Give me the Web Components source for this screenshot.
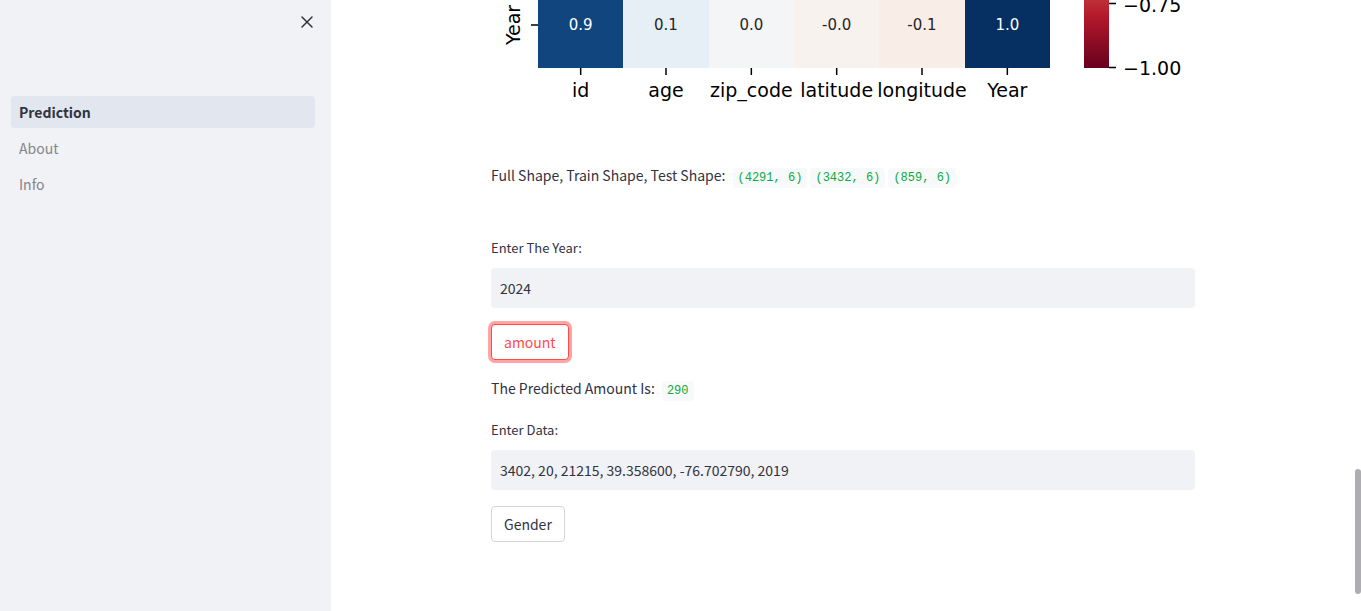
<!DOCTYPE html>
<html lang="en">
<head>
<meta charset="utf-8">
<title>Prediction</title>
<style>
  html, body { margin: 0; height: 100%; }
  body {
    --text: #31333f;
    --surface: #f0f2f6;
    --accent: #ff4b4b;
    --code: "Liberation Mono", monospace;
    background: #fff;
    color: var(--text);
    font: 14px/24px "Noto Sans CJK SC", "Open Sans", sans-serif;
    overflow: hidden;
  }
  code-chip:first-of-type { margin-left: 4px; }
</style>
</head>
<body>
<app-shell>
  <app-sidebar slot="sidebar">
    <nav-item href="#prediction" active>Prediction</nav-item>
    <nav-item href="#about">About</nav-item>
    <nav-item href="#info">Info</nav-item>
  </app-sidebar>
  <correlation-heatmap></correlation-heatmap>
  <result-line>Full Shape, Train Shape, Test Shape:
    <code-chip>(4291, 6)</code-chip> <code-chip>(3432, 6)</code-chip> <code-chip>(859, 6)</code-chip>
  </result-line>
  <input-form class="spaced" label="Enter The Year:" value="2024">
    <action-button focused>amount</action-button>
    <result-line>The Predicted Amount Is: <code-chip>290</code-chip></result-line>
  </input-form>
  <input-form label="Enter Data:" value="3402, 20, 21215, 39.358600, -76.702790, 2019">
    <action-button>Gender</action-button>
  </input-form>
</app-shell>

<script>
const define = (name, html, setup) => {
  const template = document.createElement('template');
  template.innerHTML = html;
  customElements.define(name, class extends HTMLElement {
    constructor() {
      super();
      this.attachShadow({ mode: 'open' }).append(template.content.cloneNode(true));
    }
    connectedCallback() { if (setup) setup(this, this.shadowRoot); }
  });
};

define('app-shell', `
  <style>
    :host { display: flex; height: 100vh; }
    main { flex: 1; min-width: 0; overflow: hidden; }
    .block { box-sizing: border-box; max-width: 736px; margin: 0 auto; padding: 0 16px;
             display: flex; flex-direction: column; gap: 16px; }
    ::slotted(.spaced) { margin-top: 31px; }
    .rail { flex: 0 0 6px; display: flex; flex-direction: column; }
    .before { flex: 469; }
    .thumb { flex: 125; border-radius: 3px; background: #adadb2; }
    .after { flex: 17; }
  </style>
  <slot name="sidebar"></slot>
  <main><div class="block"><slot></slot></div></main>
  <div class="rail" aria-hidden="true"><div class="before"></div><div class="thumb"></div><div class="after"></div></div>
`);

define('app-sidebar', `
  <style>
    :host { flex: 0 0 331px; box-sizing: border-box; background: var(--surface); padding: 0 16px 0 11px; }
    header { height: 96px; display: flex; justify-content: flex-end; align-items: flex-start; }
    button { border: 0; background: none; padding: 14px 0; width: 16px; height: 44px; color: var(--text); }
    svg { display: block; }
    nav { display: flex; flex-direction: column; gap: 4px; }
  </style>
  <header><button type="button" aria-label="Close sidebar">
    <svg width="16" height="16" viewBox="0 0 16 16" stroke="currentColor" stroke-width="1.5" stroke-linecap="round"><path d="M3 3l10 10M13 3L3 13"/></svg>
  </button></header>
  <nav><slot></slot></nav>
`);

define('nav-item', `
  <style>
    :host { display: block; }
    a { display: block; padding: 4px 8px; border-radius: 4px; color: #83858e; text-decoration: none; }
    :host([active]) a { background: #e2e6ee; color: var(--text); font-weight: 700; }
  </style>
  <a><slot></slot></a>
`, (host, root) => {
  root.querySelector('a').href = host.getAttribute('href');
});

define('code-chip', `
  <style>
    :host { display: inline; }
    code { padding: 3px 5px; border-radius: 4px; background: #f8f9fb; color: #09ab3b;
           font: 12px/16px var(--code); }
  </style>
  <code><slot></slot></code>
`);

define('result-line', `
  <style>:host { display: block; } p { margin: 0; }</style>
  <p><slot></slot></p>
`);

define('action-button', `
  <style>
    :host { display: block; }
    button { display: block; height: 36px; padding: 0 12px; border: 1px solid #d6d6d9;
             border-radius: 4px; background: #fff; color: var(--text); font: inherit; }
    :host([focused]) button { border-color: var(--accent); color: var(--accent);
             box-shadow: 0 0 0 3px rgba(255, 75, 75, .5); }
  </style>
  <button type="button"><slot></slot></button>
`);

define('input-form', `
  <style>
    :host { display: flex; flex-direction: column; gap: 16px; }
    label { display: block; margin-bottom: 6px; font-size: 13px; line-height: 28px; }
    input { display: block; box-sizing: border-box; width: 100%; height: 40px; padding: 0 9px;
            border: 0; border-radius: 4px; background: var(--surface); color: var(--text); font: inherit; }
  </style>
  <div><label for="field"></label><input id="field" type="text"></div>
  <slot></slot>
`, (host, root) => {
  root.querySelector('label').textContent = host.getAttribute('label');
  root.querySelector('input').value = host.getAttribute('value');
});

define('correlation-heatmap', `
  <style>
    :host { display: block; }
    svg { display: block; width: 100%; height: auto; font-family: "DejaVu Sans", sans-serif; font-size: 19px; }
    .values { font-size: 15px; }
  </style>
  <svg viewBox="0 0 704 147" role="img" aria-label="Correlation heatmap">
    <defs>
      <linearGradient id="bar" gradientUnits="userSpaceOnUse" x1="0" y1="-34" x2="0" y2="68">
        <stop offset="0" stop-color="#d6604d"/><stop offset=".5" stop-color="#b2182b"/><stop offset="1" stop-color="#67001f"/>
      </linearGradient>
    </defs>
    <text transform="translate(29 25) rotate(-90)" text-anchor="middle">Year</text>
    <path d="M40 25h7" stroke="#000" stroke-width="1.5"/>
    <g class="cells" shape-rendering="crispEdges"></g>
    <g class="values" text-anchor="middle"></g>
    <g class="names" text-anchor="middle"></g>
    <path d="M593 0h25v68h-25z" fill="url(#bar)"/>
    <path d="M618 3.5h7M618 67.5h7" stroke="#000" stroke-width="1.5"/>
    <text x="632" y="12">−0.75</text>
    <text x="632" y="75">−1.00</text>
  </svg>
`, (host, root) => {
  const columns = [
    ['id', '0.9', '#10457e', '#fff'], ['age', '0.1', '#e6eff6', '#262626'],
    ['zip_code', '0.0', '#f3f5f6', '#262626'], ['latitude', '-0.0', '#f8f2ef', '#262626'],
    ['longitude', '-0.1', '#f9eee7', '#262626'], ['Year', '1.0', '#053061', '#fff']
  ];
  const add = (group, tag, attrs, text = '') => {
    const node = document.createElementNS('http://www.w3.org/2000/svg', tag);
    for (const key in attrs) node.setAttribute(key, attrs[key]);
    node.textContent = text;
    root.querySelector(group).append(node);
  };
  const step = 512 / columns.length;
  columns.forEach(([name, value, fill, ink], i) => {
    const left = 47 + i * step, mid = left + step / 2;
    add('.cells', 'rect', { x: left, y: 0, width: step, height: 68, fill });
    add('.values', 'text', { x: mid, y: 30, fill: ink }, value);
    add('.names', 'path', { d: `M${mid} 68v7`, stroke: '#000', 'stroke-width': 1.5 });
    add('.names', 'text', { x: mid, y: 97 }, name);
  });
});
</script>
</body>
</html>
